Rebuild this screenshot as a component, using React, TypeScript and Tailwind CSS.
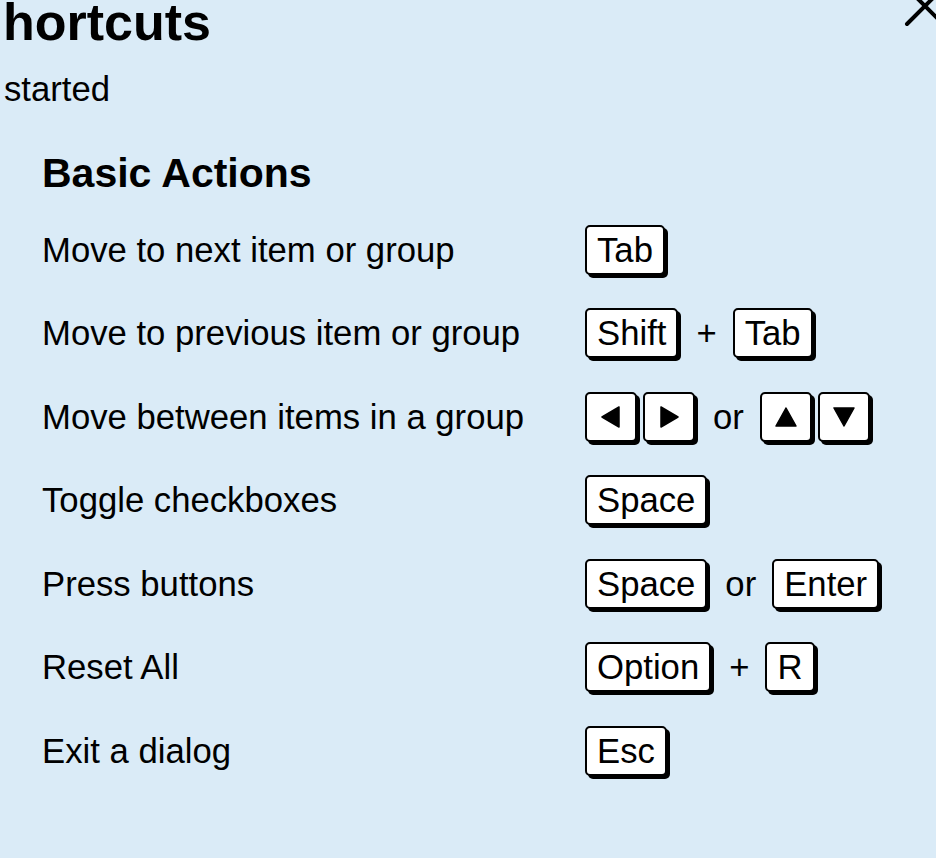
import React from "react";

type Row = { label: string; keys: React.ReactNode };

function Key({ children, square = false }: { children: React.ReactNode; square?: boolean }) {
  return (
    <span
      className={`inline-flex h-[50px] shrink-0 items-center justify-center rounded-[5px] border-2 border-black bg-white shadow-[3px_3px_0_#000] ${
        square ? "w-[52px]" : "px-[10px]"
      }`}
    >
      {children}
    </span>
  );
}

function Sep({ children }: { children: React.ReactNode }) {
  return <span className="ml-[18px] mr-[16px]">{children}</span>;
}

function Arrow({ dir }: { dir: "left" | "right" | "up" | "down" }) {
  const points = {
    left: "19,1 19,21 2,11",
    right: "3,1 3,21 20,11",
    up: "11,2 1,20 21,20",
    down: "11,20 1,2 21,2",
  }[dir];
  return (
    <svg width="22" height="22" viewBox="0 0 22 22">
      <polygon points={points} fill="#000" stroke="#000" strokeWidth="1.5" strokeLinejoin="round" />
    </svg>
  );
}

const rows: Row[] = [
  { label: "Move to next item or group", keys: <Key>Tab</Key> },
  {
    label: "Move to previous item or group",
    keys: (
      <>
        <Key>Shift</Key>
        <Sep>+</Sep>
        <Key>Tab</Key>
      </>
    ),
  },
  {
    label: "Move between items in a group",
    keys: (
      <>
        <span className="flex gap-[6px]">
          <Key square>
            <Arrow dir="left" />
          </Key>
          <Key square>
            <Arrow dir="right" />
          </Key>
        </span>
        <Sep>or</Sep>
        <span className="flex gap-[6px]">
          <Key square>
            <Arrow dir="up" />
          </Key>
          <Key square>
            <Arrow dir="down" />
          </Key>
        </span>
      </>
    ),
  },
  { label: "Toggle checkboxes", keys: <Key>Space</Key> },
  {
    label: "Press buttons",
    keys: (
      <>
        <Key>Space</Key>
        <Sep>or</Sep>
        <Key>Enter</Key>
      </>
    ),
  },
  {
    label: "Reset All",
    keys: (
      <>
        <Key>Option</Key>
        <Sep>+</Sep>
        <Key>R</Key>
      </>
    ),
  },
  { label: "Exit a dialog", keys: <Key>Esc</Key> },
];

export default function App() {
  return (
    <div className="relative h-[858px] w-full overflow-hidden bg-[#daebf7] font-['Liberation_Sans',Arial,sans-serif] text-black">
      {/* close button, mostly off-screen */}
      <button aria-label="Close" className="absolute left-[898px] top-[-21px] p-0">
        <svg width="54" height="54" viewBox="0 0 54 54">
          <path d="M9 45 L45 9 M9 9 L45 45" stroke="#000" strokeWidth="4" strokeLinecap="round" fill="none" />
        </svg>
      </button>

      <h1 className="ml-[3px] text-[52px] font-bold leading-[45px]">hortcuts</h1>
      <p className="ml-[4px] mt-[25px] text-[34.7px] leading-[38px]">started</p>

      <section className="pl-[42px]">
        <h2 className="mt-[42px] text-[41px] font-bold leading-[46px]">Basic Actions</h2>
        <div className="mt-[28px] flex flex-col gap-y-[33.5px] text-[34.7px] leading-[38px]">
          {rows.map((r) => (
            <div key={r.label} className="flex h-[50px] items-center">
              <div className="w-[543px] shrink-0 pt-[1px]">{r.label}</div>
              <div className="flex items-center pt-[1px]">{r.keys}</div>
            </div>
          ))}
        </div>
      </section>
    </div>
  );
}
